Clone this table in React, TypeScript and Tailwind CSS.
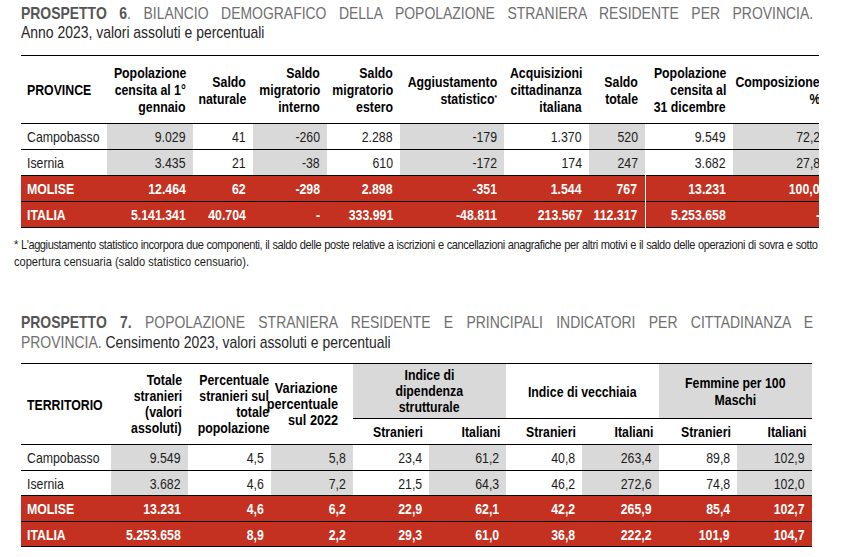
import React from 'react';

// Liberation Sans squeezed horizontally stands in for Arial Narrow
const sans = "font-['Liberation_Sans',Arial,sans-serif]";

const gray = 'bg-[#d9d9d9]';
const red = 'bg-[#c43120]';

type Align = 'left' | 'right' | 'center';
const itemsCls: Record<Align, string> = { left: 'items-start', right: 'items-end', center: 'items-center' };
const originCls: Record<Align, string> = { left: 'origin-left', right: 'origin-right', center: 'origin-center' };

function Narrow({ lines, align = 'right' }: { lines: React.ReactNode[]; align?: Align }) {
  return (
    <div className={`flex flex-col ${itemsCls[align]}`}>
      {lines.map((l, i) => (
        <span key={i} className={`block whitespace-nowrap scale-x-[0.82] ${originCls[align]}`}>
          {l}
        </span>
      ))}
    </div>
  );
}

// Prospetto 6
const cols6 = [86, 86, 60, 74, 73, 104, 85, 56, 88, 94];
const shade6 = [false, true, false, true, false, true, false, true, false, true];

const rows6 = [
  ['Campobasso', '9.029', '41', '-260', '2.288', '-179', '1.370', '520', '9.549', '72,2'],
  ['Isernia', '3.435', '21', '-38', '610', '-172', '174', '247', '3.682', '27,8'],
];
const totals6 = [
  ['MOLISE', '12.464', '62', '-298', '2.898', '-351', '1.544', '767', '13.231', '100,0'],
  ['ITALIA', '5.141.341', '40.704', '-', '333.991', '-48.811', '213.567', '112.317', '5.253.658', '-'],
];

// Prospetto 7
const cols7 = [90, 77, 83, 82, 76, 77, 76, 77, 78, 75];
const shade7 = [false, true, false, true, false, true, false, true, false, true];

const rows7 = [
  ['Campobasso', '9.549', '4,5', '5,8', '23,4', '61,2', '40,8', '263,4', '89,8', '102,9'],
  ['Isernia', '3.682', '4,6', '7,2', '21,5', '64,3', '46,2', '272,6', '74,8', '102,0'],
];
const totals7 = [
  ['MOLISE', '13.231', '4,6', '6,2', '22,9', '62,1', '42,2', '265,9', '85,4', '102,7'],
  ['ITALIA', '5.253.658', '8,9', '2,2', '29,3', '61,0', '36,8', '222,2', '101,9', '104,7'],
];

function Th({
  lines,
  align = 'right',
  className = '',
  ...rest
}: {
  lines: React.ReactNode[];
  align?: Align;
  className?: string;
  rowSpan?: number;
  colSpan?: number;
}) {
  const pad = align === 'left' ? 'pl-[6px]' : align === 'right' ? 'pr-[7px]' : '';
  return (
    <th {...rest} className={`align-middle font-bold text-[15px] leading-[17px] text-black ${pad} ${className}`}>
      <Narrow lines={lines} align={align} />
    </th>
  );
}

function DataRows({
  rows,
  totals,
  shade,
  heights,
  splitCol,
}: {
  rows: string[][];
  totals: string[][];
  shade: boolean[];
  heights: number[];
  splitCol?: number;
}) {
  return (
    <>
      {rows.map((r, ri) => (
        <tr key={r[0]} className="border-b border-black" style={{ height: heights[ri] }}>
          {r.map((v, i) => (
            <td
              key={i}
              className={`p-0 text-[15px] leading-none text-[#1c1c1c] ${
                i === 0 ? 'pl-[6px]' : `pr-[7px] ${shade[i] ? gray : ''}`
              }`}
            >
              <Narrow lines={[v]} align={i === 0 ? 'left' : 'right'} />
            </td>
          ))}
        </tr>
      ))}
      {totals.map((r, ri) => (
        <tr key={r[0]} className={`border-b border-black ${red}`} style={{ height: heights[rows.length + ri] }}>
          {r.map((v, i) => (
            <td
              key={i}
              className={`p-0 text-[15px] leading-none font-bold text-white ${i === 0 ? 'pl-[6px]' : 'pr-[7px]'} ${
                splitCol === i ? 'border-l border-white' : ''
              }`}
            >
              <Narrow lines={[v]} align={i === 0 ? 'left' : 'right'} />
            </td>
          ))}
        </tr>
      ))}
    </>
  );
}

export default function App() {
  return (
    <div className={`w-[844px] h-[557px] bg-white overflow-hidden ${sans}`}>
      {/* Prospetto 6 title */}
      <div className="ml-[21px] pt-[4px] w-[966px] origin-left scale-x-[0.82]">
        <div className="whitespace-nowrap text-[17px] leading-[20px] text-[#6e6e6e] text-justify [text-align-last:justify]">
          <span className="font-bold text-[#555555]">PROSPETTO 6</span>. BILANCIO DEMOGRAFICO DELLA POPOLAZIONE
          STRANIERA RESIDENTE PER PROVINCIA.
        </div>
        <div className="text-[17px] leading-[18px] text-[#262626]">Anno 2023, valori assoluti e percentuali</div>
      </div>

      {/* Prospetto 6 table */}
      <div className="ml-[21px] mt-[13px] w-[798px] overflow-hidden">
        <table className="table-fixed border-collapse w-[806px] border-t border-black">
          <colgroup>
            {cols6.map((w, i) => (
              <col key={i} style={{ width: w }} />
            ))}
          </colgroup>
          <thead>
            <tr className="h-[68px] border-b border-black">
              <Th align="left" lines={['PROVINCE']} />
              <Th lines={['Popolazione', 'censita al 1°', 'gennaio']} />
              <Th lines={['Saldo', 'naturale']} />
              <Th lines={['Saldo', 'migratorio', 'interno']} />
              <Th lines={['Saldo', 'migratorio', 'estero']} />
              <Th
                lines={[
                  'Aggiustamento',
                  <>
                    statistico<sup className="text-[8px]">*</sup>
                  </>,
                ]}
              />
              <Th lines={['Acquisizioni', 'cittadinanza', 'italiana']} />
              <Th lines={['Saldo', 'totale']} />
              <Th lines={['Popolazione', 'censita al', '31 dicembre']} />
              <Th lines={['Composizione', '%']} />
            </tr>
          </thead>
          <tbody>
            <DataRows rows={rows6} totals={totals6} shade={shade6} heights={[26, 26, 26, 26]} splitCol={8} />
          </tbody>
        </table>
      </div>

      {/* Footnote */}
      <div className="ml-[14px] mt-[8px] w-[980px] origin-left scale-x-[0.82] text-[13.5px] leading-[17px] text-[#1c1c1c]">
        <div className="whitespace-nowrap tracking-[-0.5px] text-justify [text-align-last:justify]">
          * L'aggiustamento statistico incorpora due componenti, il saldo delle poste relative a iscrizioni e
          cancellazioni anagrafiche per altri motivi e il saldo delle operazioni di sovra e sotto
        </div>
        <div>copertura censuaria (saldo statistico censuario).</div>
      </div>

      {/* Prospetto 7 title */}
      <div className="ml-[21px] mt-[43px] w-[966px] origin-left scale-x-[0.82]">
        <div className="whitespace-nowrap text-[17px] leading-[20px] text-[#6e6e6e] text-justify [text-align-last:justify]">
          <span className="font-bold text-[#555555]">PROSPETTO 7.</span> POPOLAZIONE STRANIERA RESIDENTE E
          PRINCIPALI INDICATORI PER CITTADINANZA E
        </div>
        <div className="text-[17px] leading-[19px] text-[#6e6e6e]">
          PROVINCIA. <span className="text-[#262626]">Censimento 2023, valori assoluti e percentuali</span>
        </div>
      </div>

      {/* Prospetto 7 table */}
      <div className="ml-[21px] mt-[11px] w-[791px]">
        <table className="table-fixed border-collapse w-[791px] border-t border-black">
          <colgroup>
            {cols7.map((w, i) => (
              <col key={i} style={{ width: w }} />
            ))}
          </colgroup>
          <thead>
            <tr className="h-[55px]">
              <Th rowSpan={2} align="left" lines={['TERRITORIO']} />
              <Th
                rowSpan={2}
                className="!leading-[16px] !pr-[6px]"
                lines={['Totale', 'stranieri', '(valori', 'assoluti)']}
              />
              <Th
                rowSpan={2}
                className="!leading-[16px] !pr-[2px]"
                lines={['Percentuale', 'stranieri sul', 'totale', 'popolazione']}
              />
              <Th
                rowSpan={2}
                className="!text-[15.5px] !leading-[16px] !pr-[15px]"
                lines={['Variazione', 'percentuale', 'sul 2022']}
              />
              <Th
                colSpan={2}
                align="center"
                className={`${gray} !leading-[16px]`}
                lines={['Indice di', 'dipendenza', 'strutturale']}
              />
              <Th colSpan={2} align="center" lines={['Indice di vecchiaia']} />
              <Th colSpan={2} align="center" className={gray} lines={['Femmine per 100', 'Maschi']} />
            </tr>
            <tr className="h-[26px] border-b border-black">
              {['Stranieri', 'Italiani', 'Stranieri', 'Italiani', 'Stranieri', 'Italiani'].map((s, i) => (
                <Th key={i} className="border-t border-black !pr-[6px]" lines={[s]} />
              ))}
            </tr>
          </thead>
          <tbody>
            <DataRows rows={rows7} totals={totals7} shade={shade7} heights={[26, 25, 26, 25]} />
          </tbody>
        </table>
      </div>
    </div>
  );
}
